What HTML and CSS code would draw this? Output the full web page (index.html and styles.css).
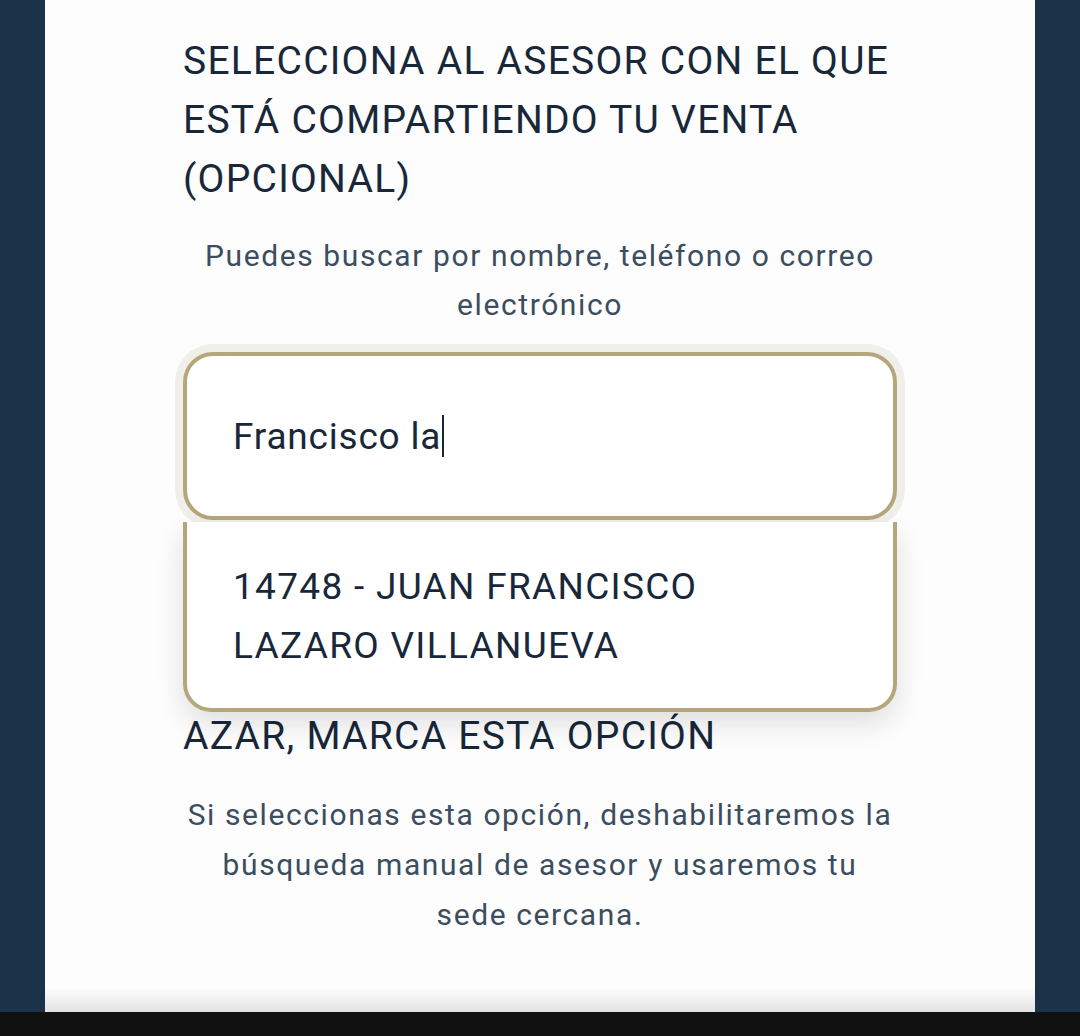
FILE: index.html
```html
<!DOCTYPE html>
<html lang="es">

<head>
    <meta charset="UTF-8">
    <meta name="viewport" content="width=device-width, initial-scale=1.0">
    <title>Asesor</title>
    <link rel="stylesheet" href="styles.css">
</head>

<body>
    <div class="screen">
        <div class="card">
            <h2 class="section-title">SELECCIONA AL ASESOR CON EL QUE ESTÁ COMPARTIENDO TU VENTA (OPCIONAL)</h2>
            <p class="hint">Puedes buscar por nombre, teléfono o correo electrónico</p>

            <div class="search">
                <div class="search-input">
                    <span class="search-value">Francisco la</span><span class="caret"></span>
                </div>
                <ul class="results">
                    <li>14748 - JUAN FRANCISCO LAZARO VILLANUEVA</li>
                </ul>
            </div>

            <h2 class="section-title random-title">AZAR, MARCA ESTA OPCIÓN</h2>
            <p class="hint random-hint">Si seleccionas esta opción, deshabilitaremos la búsqueda manual de asesor y usaremos tu sede cercana.</p>
        </div>
        <div class="bottom-bar"></div>
    </div>
</body>

</html>
```

FILE: styles.css
```css
body {
    margin: 0;
    background-color: #1b3249;
    font-family: Roboto, "Noto Sans", sans-serif;
}

.screen {
    height: 1036px;
    display: flex;
    flex-direction: column;
}

.card {
    flex: 1;
    margin: 0 45px;
    padding: 32px 138px 0;
    background: linear-gradient(to bottom, #fdfdfd 0, #fdfdfd calc(100% - 24px), #e2e2e2 100%);
}

.section-title {
    margin: 0;
    font-size: 39px;
    line-height: 59px;
    font-weight: 400;
    letter-spacing: 1.25px;
    color: #18283a;
}

.hint {
    margin: 22px 0 0;
    font-size: 30px;
    line-height: 49px;
    letter-spacing: 1.6px;
    text-align: center;
    color: #3b4d5e;
}

.search {
    position: relative;
    margin-top: 23px;
}

.search-input {
    height: 160px;
    display: flex;
    align-items: center;
    padding-left: 46px;
    border: 4px solid #b5a77c;
    border-radius: 30px;
    background-color: #fff;
    box-shadow: 0 0 0 8px #f1efea;
    font-size: 37px;
    letter-spacing: 0.8px;
    color: #18283a;
}

.caret {
    display: inline-block;
    width: 2px;
    height: 42px;
    margin-left: 1px;
    background-color: #18283a;
}

.results {
    position: absolute;
    top: 170px;
    left: 0;
    right: 0;
    margin: 0;
    padding: 35px 180px 33px 46px;
    list-style: none;
    border: 4px solid #b5a77c;
    border-top: none;
    border-radius: 0 0 28px 28px;
    background-color: #fff;
    box-shadow: 0 12px 28px rgba(0, 0, 0, 0.12);
    font-size: 37px;
    line-height: 59px;
    letter-spacing: 1.3px;
    color: #18283a;
}

.random-title {
    margin-top: 187px;
}

.random-hint {
    margin-top: 24px;
    line-height: 50px;
}

.bottom-bar {
    height: 24px;
    background-color: #111;
}
```
